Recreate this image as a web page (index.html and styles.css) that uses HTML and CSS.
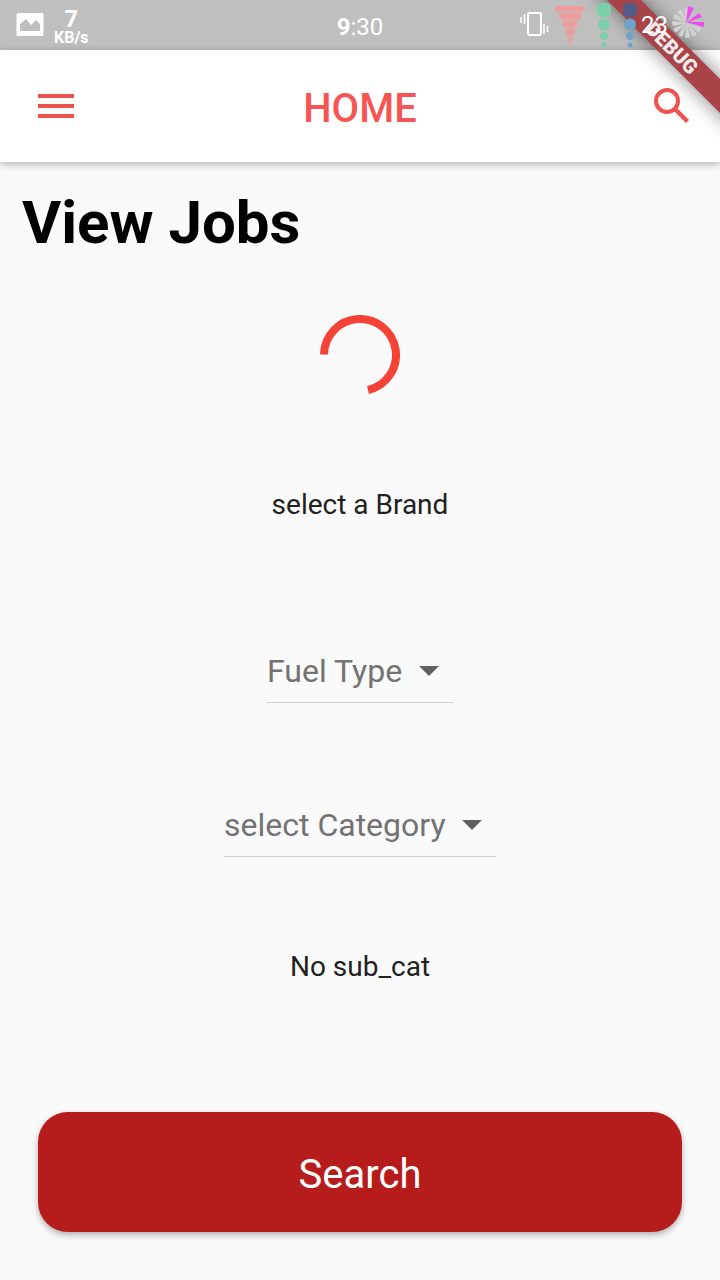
FILE: index.html
```html
<!DOCTYPE html>
<html lang="en">
<head>
<meta charset="utf-8">
<meta name="viewport" content="width=device-width, initial-scale=1">
<title>Home</title>
<link rel="stylesheet" href="styles.css">
</head>
<body>
<div class="status">
  <div class="status-left">
    <svg class="picture" width="28" height="24" viewBox="0 0 28 24"><path fill="#fff" fill-rule="evenodd" d="M2 0h24q1.500 0 1.500 1.500v20q0 1.500-1.500 1.500H2Q.5 23 .5 21.500v-20Q.5 0 2 0zM4 18v-7l6-5 5 6 5-5 4 4v7z"/></svg>
    <div class="speed"><span class="speed-value">7</span><span class="speed-unit">KB/s</span></div>
  </div>
  <div class="clock"><b>9</b>:30</div>
  <div class="status-right">
    <svg width="30" height="28" viewBox="0 0 30 28" fill="none" stroke="#fff" stroke-width="2"><rect x="9" y="2" width="13" height="22" rx="2"/><path d="M2 6v6M5.500 3v10M25 13v10M28.500 15v6" stroke-width="1.500"/></svg>
    <svg width="32" height="40" viewBox="0 0 32 40" fill="none" stroke="#ee9c9c"><path stroke-width="5" d="M1 3.500h30M5 11.500h22"/><path stroke-width="5" d="M9 19h14M11 27h10"/><path fill="#ee9c9c" stroke="none" d="M3 6h26l-2 3H5zM8 14h16l-2 3H10zM11 21h10l-1 4h-8zM13 29h6l-1 4h-4zM13 33h6v4l-3 3-3-3z" opacity=".55"/></svg>
    <svg width="16" height="46" viewBox="0 0 16 46" fill="#7dceaa"><rect x="1" y="1" width="14" height="14" rx="5"/><circle cx="8" cy="22.500" r="6"/><circle cx="8" cy="34" r="4"/><circle cx="8" cy="43" r="2.500"/></svg>
    <svg width="16" height="46" viewBox="0 0 16 46" fill="#6ea4cb"><rect x="1" y="1" width="14" height="14" rx="5" fill="#535b8b"/><circle cx="8" cy="22.500" r="6"/><circle cx="8" cy="34" r="4"/><circle cx="8" cy="43" r="2.500"/></svg>
    <span class="battery">23</span>
    <svg class="burst" width="36" height="36" viewBox="-18 -18 36 36">
      <g fill="#d2d2d2"><path id="ray" d="M0 0l-3-14q3-2 5 0z"/><use href="#ray" transform="rotate(-30)"/><use href="#ray" transform="rotate(-60)"/><use href="#ray" transform="rotate(-90)"/><use href="#ray" transform="rotate(-120)"/><use href="#ray" transform="rotate(-150)"/><use href="#ray" transform="rotate(180)"/><use href="#ray" transform="rotate(150)"/><use href="#ray" transform="rotate(120)"/></g>
      <path fill="#f04af0" d="M-1 0L1-17l6 2zM-1 0L12-10l3 4zM-1-1L17-1v5z"/>
    </svg>
  </div>
</div>
<div class="ribbon">DEBUG</div>
<header class="appbar">
  <button class="icon-button" aria-label="Menu"><svg width="36" height="24" viewBox="0 0 36 24" fill="#ef5350"><path d="M0 0h36v4H0zM0 10h36v4H0zM0 20h36v4H0z"/></svg></button>
  <h1 class="title">HOME</h1>
  <button class="icon-button" aria-label="Search"><svg width="36" height="36" viewBox="0 0 36 36" fill="none" stroke="#ef5350"><circle cx="13" cy="13" r="11" stroke-width="4"/><path d="M21 21l12.500 12.500" stroke-width="4.500"/></svg></button>
</header>
<main class="page">
  <h2 class="heading">View Jobs</h2>
  <svg class="spinner" role="img" aria-label="Loading" width="80" height="80" viewBox="0 0 80 80" fill="none" stroke="#f44336" stroke-width="8"><path d="M4 39.500A36 36 0 1 1 48 75.100"/></svg>
  <p class="note">select a Brand</p>
  <div class="picker fuel">
    <select aria-label="Fuel Type"><option>Fuel Type</option></select>
    <svg width="20" height="10" viewBox="0 0 20 10" fill="#616161"><path d="M0 0h20L10 10z"/></svg>
  </div>
  <div class="picker category">
    <select aria-label="select Category"><option>select Category</option></select>
    <svg width="20" height="10" viewBox="0 0 20 10" fill="#616161"><path d="M0 0h20L10 10z"/></svg>
  </div>
  <p class="note">No sub_cat</p>
  <button class="search">Search</button>
</main>
</body>
</html>
```
FILE: styles.css
```css
* { box-sizing: border-box; }
body {
  margin: 0;
  min-height: 100vh;
  position: relative;
  overflow-x: hidden;
  background: #fafafa;
  color: #212121;
  font-family: Roboto, "Liberation Sans", sans-serif;
}
svg { display: block; flex: none; }
button { border: 0; font-family: inherit; cursor: pointer; }
.status {
  display: grid;
  grid-template-columns: 1fr auto 1fr;
  grid-template-rows: 100%;
  height: 50px;
  color: #fff;
  background: #bfbfbf;
}
.status-left, .clock, .status-right { position: relative; z-index: 3; }
.status-left { display: flex; align-items: center; gap: 10px; padding-left: 16px; }
.speed { display: flex; flex-direction: column; align-items: center; padding-top: 4px; font-weight: 700; }
.speed-value { font-size: 24px; line-height: 22px; }
.speed-unit { font-size: 16px; line-height: 16px; }
.clock { font-size: 24px; line-height: 54px; }
.status-right {
  display: flex;
  justify-content: flex-end;
  align-items: center;
  padding-right: 15px;
}
.status-right svg:nth-child(2) { margin: 0 10px 0 5px; }
.status-right svg:nth-child(3) { margin-right: 10px; }
.battery { margin: 0 1px 0 3px; font-size: 24px; font-weight: 400; }
.burst { margin-bottom: 4px; }
.ribbon {
  position: absolute;
  z-index: 2;
  top: 36px;
  right: -52px;
  width: 200px;
  height: 24px;
  transform: rotate(45deg);
  background: #a84448;
  box-shadow: 0 0 20px rgba(0, 0, 0, 0.5);
  color: #f4ecec;
  font-size: 20px;
  font-weight: 900;
  line-height: 24px;
  text-align: center;
}
.appbar {
  display: grid;
  grid-template-columns: 1fr auto 1fr;
  align-items: center;
  height: 112px;
  padding: 0 30px 0 38px;
  background: #fff;
  box-shadow: 0 2px 8px rgba(0, 0, 0, 0.3);
}
.icon-button { padding: 0; background: none; justify-self: start; }
.icon-button:last-child { justify-self: end; }
.title { margin: 0 0 0 -8px; padding-top: 6px; color: #f55654; font-size: 40px; font-weight: 500; line-height: 48px; }
.page { display: flex; flex-direction: column; align-items: center; padding: 25px 38px 48px; }
.heading {
  align-self: flex-start;
  margin: 0 0 56px -16px;
  color: #000;
  font-size: 60px;
  font-weight: 700;
  line-height: 72px;
}
.note { margin: 94px 0 0; font-size: 28px; line-height: 32px; }
.picker { display: grid; align-items: center; border-bottom: 1px solid #d0d0d0; }
.picker select, .picker svg { grid-area: 1 / 1; }
.picker svg { justify-self: end; margin-right: 14px; pointer-events: none; }
.picker select {
  appearance: none;
  height: 62px;
  margin: 0;
  padding: 0 50px 0 0;
  border: 0;
  background: none;
  color: #737373;
  font: 400 32px/40px Roboto, sans-serif;
}
.fuel { margin-top: 119px; }
.category { margin-top: 91px; }
.search {
  width: 100%;
  height: 120px;
  margin-top: 129px;
  padding: 4px 0 0;
  border-radius: 30px;
  background: #b71c1c;
  box-shadow: 0 3px 6px rgba(0, 0, 0, 0.3);
  color: #fff;
  font-size: 40px;
}
```
